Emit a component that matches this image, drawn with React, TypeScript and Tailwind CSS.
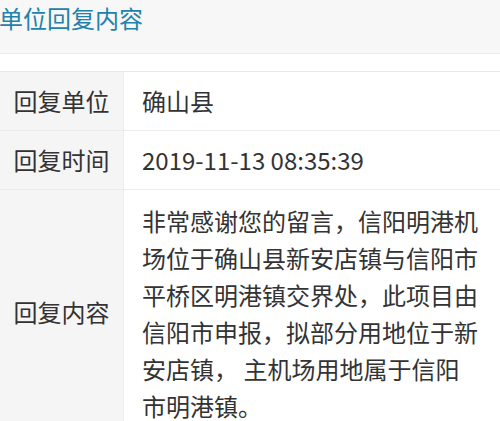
export default function App() {
  const rows = [
    { label: "回复单位", value: "确山县" },
    { label: "回复时间", value: "2019-11-13 08:35:39" },
  ];

  return (
    <div
      className="w-[500px] h-[421px] overflow-hidden bg-white text-[#333]"
      style={{ fontFamily: '"Noto Sans CJK SC", "Noto Sans", sans-serif' }}
    >
      {/* Section header */}
      <div className="h-[54px] bg-[#f7f7f7] border-b border-[#ececec] pt-[1px]">
        <h2 className="text-[24px] leading-[34px] text-[#2382a9] -ml-[1px]">单位回复内容</h2>
      </div>

      <div className="h-[17px]" />

      {/* Reply table */}
      <div className="border-t border-[#e8e8e8]">
        {rows.map((r) => (
          <div key={r.label} className="flex h-[59px] border-b border-[#ececec]">
            <div className="w-[124px] shrink-0 bg-[#f6f5f6] border-r border-[#ececec] flex items-center justify-center text-[24px]">
              {r.label}
            </div>
            <div className="flex-1 flex items-center pl-[18px] text-[24px]">{r.value}</div>
          </div>
        ))}
        <div className="flex">
          <div className="w-[124px] shrink-0 bg-[#f6f5f6] border-r border-[#ececec] flex items-center justify-center text-[24px]">
            回复内容
          </div>
          <div className="flex-1 pl-[18px] pr-[20px] pt-[12px] pb-[10px] text-[24px] leading-[37px]">
            非常感谢您的留言，信阳明港机场位于确山县新安店镇与信阳市平桥区明港镇交界处，此项目由信阳市申报，拟部分用地位于新安店镇， 主机场用地属于信阳市明港镇。
          </div>
        </div>
      </div>
    </div>
  );
}
